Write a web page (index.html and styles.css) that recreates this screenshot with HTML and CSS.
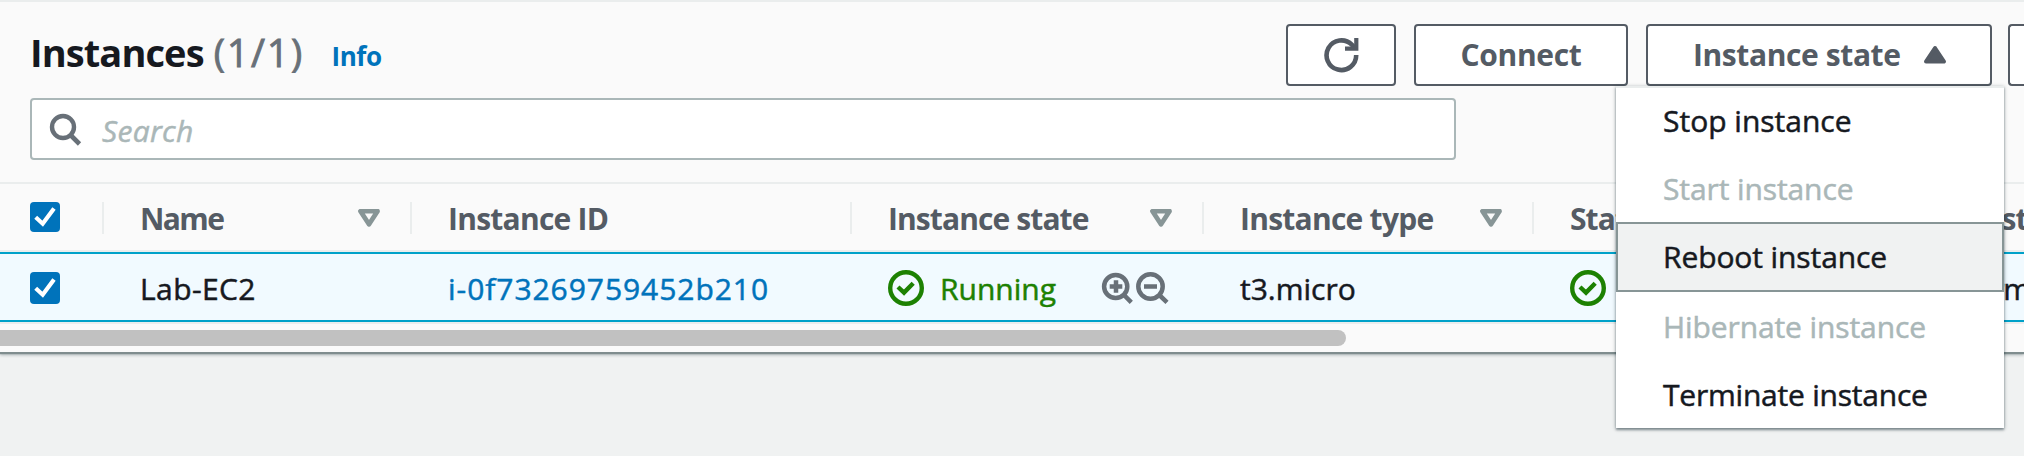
FILE: index.html
```html
<!DOCTYPE html>
<html lang="en">
<head>
<meta charset="utf-8">
<title>Instances</title>
<link rel="stylesheet" href="styles.css">
</head>
<body>
<svg class="defs" width="0" height="0">
  <symbol id="check" viewBox="0 0 30 30"><path d="M5.7 15.3 12.7 21.7 24 6.5" fill="none" stroke="#fff" stroke-width="4.2"/></symbol>
  <symbol id="sort" viewBox="0 0 22 18"><path d="M2.5 2.2H19.5L11 15.3Z" fill="none" stroke="#879596" stroke-width="4.8" stroke-linejoin="round"/></symbol>
  <symbol id="ok" viewBox="0 0 36 36"><circle cx="18" cy="18" r="15.8" fill="none" stroke="#1d8102" stroke-width="4.4"/><path d="M10 17 16 22.6 25.2 13.2" fill="none" stroke="#1d8102" stroke-width="4.4"/></symbol>
</svg>
<main class="panel">
  <header class="toolbar">
    <h1 class="title">Instances <span class="count">(1/1)</span></h1>
    <a class="info">Info</a>
    <div class="actions">
      <button class="btn btn-refresh"><svg width="36" height="36" viewBox="0 0 36 36"><path d="M33.2 18A14.8 14.8 0 1 1 28.8 7.7L31.5 10.5" fill="none" stroke="#545b64" stroke-width="4.6"/><path d="M33.3 1V11.6H22" fill="none" stroke="#545b64" stroke-width="4.2"/></svg></button>
      <button class="btn btn-connect">Connect</button>
      <div class="dropdown">
        <button class="btn btn-state">Instance state<svg width="24" height="20" viewBox="0 0 24 20"><path d="M3 16.5 12 3 21 16.5Z" fill="#545b64" stroke="#545b64" stroke-width="4" stroke-linejoin="round"/></svg></button>
        <ul class="menu">
          <li class="first">Stop instance</li>
          <li class="disabled">Start instance</li>
          <li class="active">Reboot instance</li>
          <li class="disabled">Hibernate instance</li>
          <li class="last">Terminate instance</li>
        </ul>
      </div>
      <button class="btn btn-more"></button>
    </div>
  </header>
  <div class="search">
    <svg width="34" height="36" viewBox="0 0 34 36"><circle cx="14" cy="15" r="11" fill="none" stroke="#687078" stroke-width="4.4"/><path d="M21.5 23 30.5 32" stroke="#687078" stroke-width="4.6"/></svg>
    <span>Search</span>
  </div>
  <section class="table">
    <div class="row head">
      <div class="cell c-check"><svg class="box"><use href="#check"/></svg></div>
      <div class="cell c-name"><span class="label">Name</span><svg class="sort"><use href="#sort"/></svg></div>
      <div class="cell c-id"><span class="label">Instance ID</span></div>
      <div class="cell c-state"><span class="label">Instance state</span><svg class="sort"><use href="#sort"/></svg></div>
      <div class="cell c-type"><span class="label">Instance type</span><svg class="sort"><use href="#sort"/></svg></div>
      <div class="cell c-status"><span class="label">Status check</span></div>
      <div class="cell c-alarm"><span class="label">Alarm status</span></div>
    </div>
    <div class="row selected">
      <div class="cell c-check"><svg class="box tall"><use href="#check"/></svg></div>
      <div class="cell c-name"><span class="value name">Lab-EC2</span></div>
      <div class="cell c-id"><a class="value link">i-0f73269759452b210</a></div>
      <div class="cell c-state">
        <svg class="ok"><use href="#ok"/></svg><span class="value running">Running</span>
        <svg class="zooms" width="68" height="34" viewBox="0 0 68 34" fill="none" stroke="#687078" stroke-width="4.5"><circle cx="14.7" cy="15.5" r="11.6"/><path d="M23 24 30.3 31.3M8.7 15.5H21.3M15 9.2V21.8"/><circle cx="49.5" cy="15.5" r="12.2"/><path d="M58.3 24 66 31.3M43 15.5H56"/></svg>
      </div>
      <div class="cell c-type"><span class="value">t3.micro</span></div>
      <div class="cell c-status"><svg class="ok"><use href="#ok"/></svg><span class="value running">2/2 checks passed</span></div>
      <div class="cell c-alarm"><span class="value alarms">No alarms</span></div>
    </div>
    <div class="scroll"><div class="thumb"></div></div>
  </section>
</main>
</body>
</html>
```
FILE: styles.css
```css
* { box-sizing: border-box; }

body {
  margin: 0;
  height: 456px;
  overflow: hidden;
  background: #f0f2f2;
  color: #16191f;
  font: 400 30px/40px "Open Sans", sans-serif;
}

.defs { position: absolute; }

.panel {
  width: 2024px;
  height: 352px;
  border-top: 2px solid #eaeded;
  background: #fafafa;
  box-shadow: 0 2px 1px #7f8d8e, 0 3px 3px rgba(0, 28, 36, .3);
}

.toolbar { display: flex; height: 96px; padding: 22px 0 0 30px; }

.title {
  margin: 0;
  padding-top: 2px;
  font-size: 38px;
  line-height: 52px;
  font-weight: 700;
  letter-spacing: -.9px;
  white-space: nowrap;
}
.count {
  margin-left: 1px;
  color: #687078;
  font-weight: 400;
  letter-spacing: 2.2px;
  -webkit-text-stroke: .9px currentColor;
}

.info {
  padding: 12px 0 0 27px;
  font-size: 26px;
  line-height: 40px;
  font-weight: 700;
  letter-spacing: -.4px;
  color: #0073bb;
}

.actions { display: flex; gap: 18px; margin-left: auto; }

.btn {
  display: flex;
  align-items: center;
  justify-content: center;
  height: 62px;
  padding: 0;
  border: 2px solid #545b64;
  border-radius: 4px;
  background: #fff;
  color: #545b64;
  font: 700 30px/40px "Open Sans", sans-serif;
  white-space: nowrap;
}
.btn-refresh { width: 110px; }
.btn-refresh svg { margin-right: 1px; }
.btn-connect { width: 214px; letter-spacing: -.3px; }
.btn-state { width: 346px; justify-content: flex-start; padding-left: 45px; letter-spacing: -.4px; }
.btn-state svg { margin-left: 22px; }
.btn-more { width: 16px; margin-left: -2px; border-right: 0; border-radius: 4px 0 0 4px; }

.dropdown { position: relative; }

.menu {
  position: absolute;
  top: 62px;
  right: -12px;
  z-index: 2;
  width: 388px;
  margin: 0;
  padding: 0;
  list-style: none;
  border-top: 2px solid #eaeded;
  background: #fff;
  box-shadow: 0 1px 4px rgba(0, 28, 36, .4), 0 2px 2px rgba(0, 28, 36, .3);
}
.menu li {
  height: 68px;
  padding-left: 47px;
  letter-spacing: -.1px;
  line-height: 69px;
  -webkit-text-stroke: .5px currentColor;
}
.menu .first { height: 66px; line-height: 66px; letter-spacing: 0; }
.menu .last { letter-spacing: -.22px; }
.menu .disabled { color: #aab7b8; }
.menu .active {
  height: 70px;
  padding-left: 45px;
  border: 2px solid #879596;
  background: #f0f2f2;
  line-height: 66px;
}

.search {
  display: flex;
  align-items: center;
  gap: 19px;
  width: 1426px;
  height: 62px;
  margin-left: 30px;
  padding-left: 17px;
  border: 2px solid #aab7b8;
  border-radius: 4px;
  background: #fff;
  color: #aab7b8;
  font-style: italic;
  letter-spacing: .3px;
  -webkit-text-stroke: .5px currentColor;
}
.search svg { margin-top: 2px; }
.search span { padding-top: 3px; }

.table { margin-top: 22px; border-top: 2px solid #eaeded; overflow: hidden; }
.row { display: flex; width: 2200px; }
.cell { display: flex; align-items: center; flex: none; padding-left: 36px; white-space: nowrap; }

.head {
  height: 68px;
  padding: 18px 0;
  border-bottom: 2px solid #eaeded;
  color: #545b64;
  font-weight: 700;
  letter-spacing: -.9px;
}
.head .cell { height: 32px; border-right: 2px solid #eaeded; }
.label { padding-top: 2px; }
.c-name .label { letter-spacing: -1.6px; }
.c-id .label { letter-spacing: -.75px; }
.c-type .label { letter-spacing: -.75px; }

.selected {
  height: 70px;
  padding-top: 2px;
  border-top: 2px solid #00a1c9;
  border-bottom: 2px solid #00a1c9;
  background: #f1faff;
}
.value { padding-top: 2px; -webkit-text-stroke: .5px currentColor; }

.c-check { width: 104px; padding-left: 30px; }
.c-name { width: 308px; }
.c-id { width: 440px; }
.c-state { width: 352px; }
.c-type { width: 330px; }
.c-status { width: 338px; }
.c-alarm { width: 300px; }

.box { width: 30px; height: 30px; margin-top: -2px; border-radius: 4px; background: #0073bb; }
.box.tall { height: 32px; margin-top: 0; }
.sort { width: 22px; height: 18px; margin: 0 30px 0 auto; }

.name { letter-spacing: .4px; }
.link { color: #0073bb; letter-spacing: .95px; }
.alarms { letter-spacing: -.9px; }
.ok { flex: none; width: 36px; height: 36px; }
.running { margin-left: 16px; color: #1d8102; }
.zooms { margin-left: 45px; }

.scroll { height: 28px; padding-top: 6px; border-top: 2px solid #eaeded; }
.thumb { width: 1346px; height: 16px; border-radius: 0 8px 8px 0; background: #c1c1c1; }
```
